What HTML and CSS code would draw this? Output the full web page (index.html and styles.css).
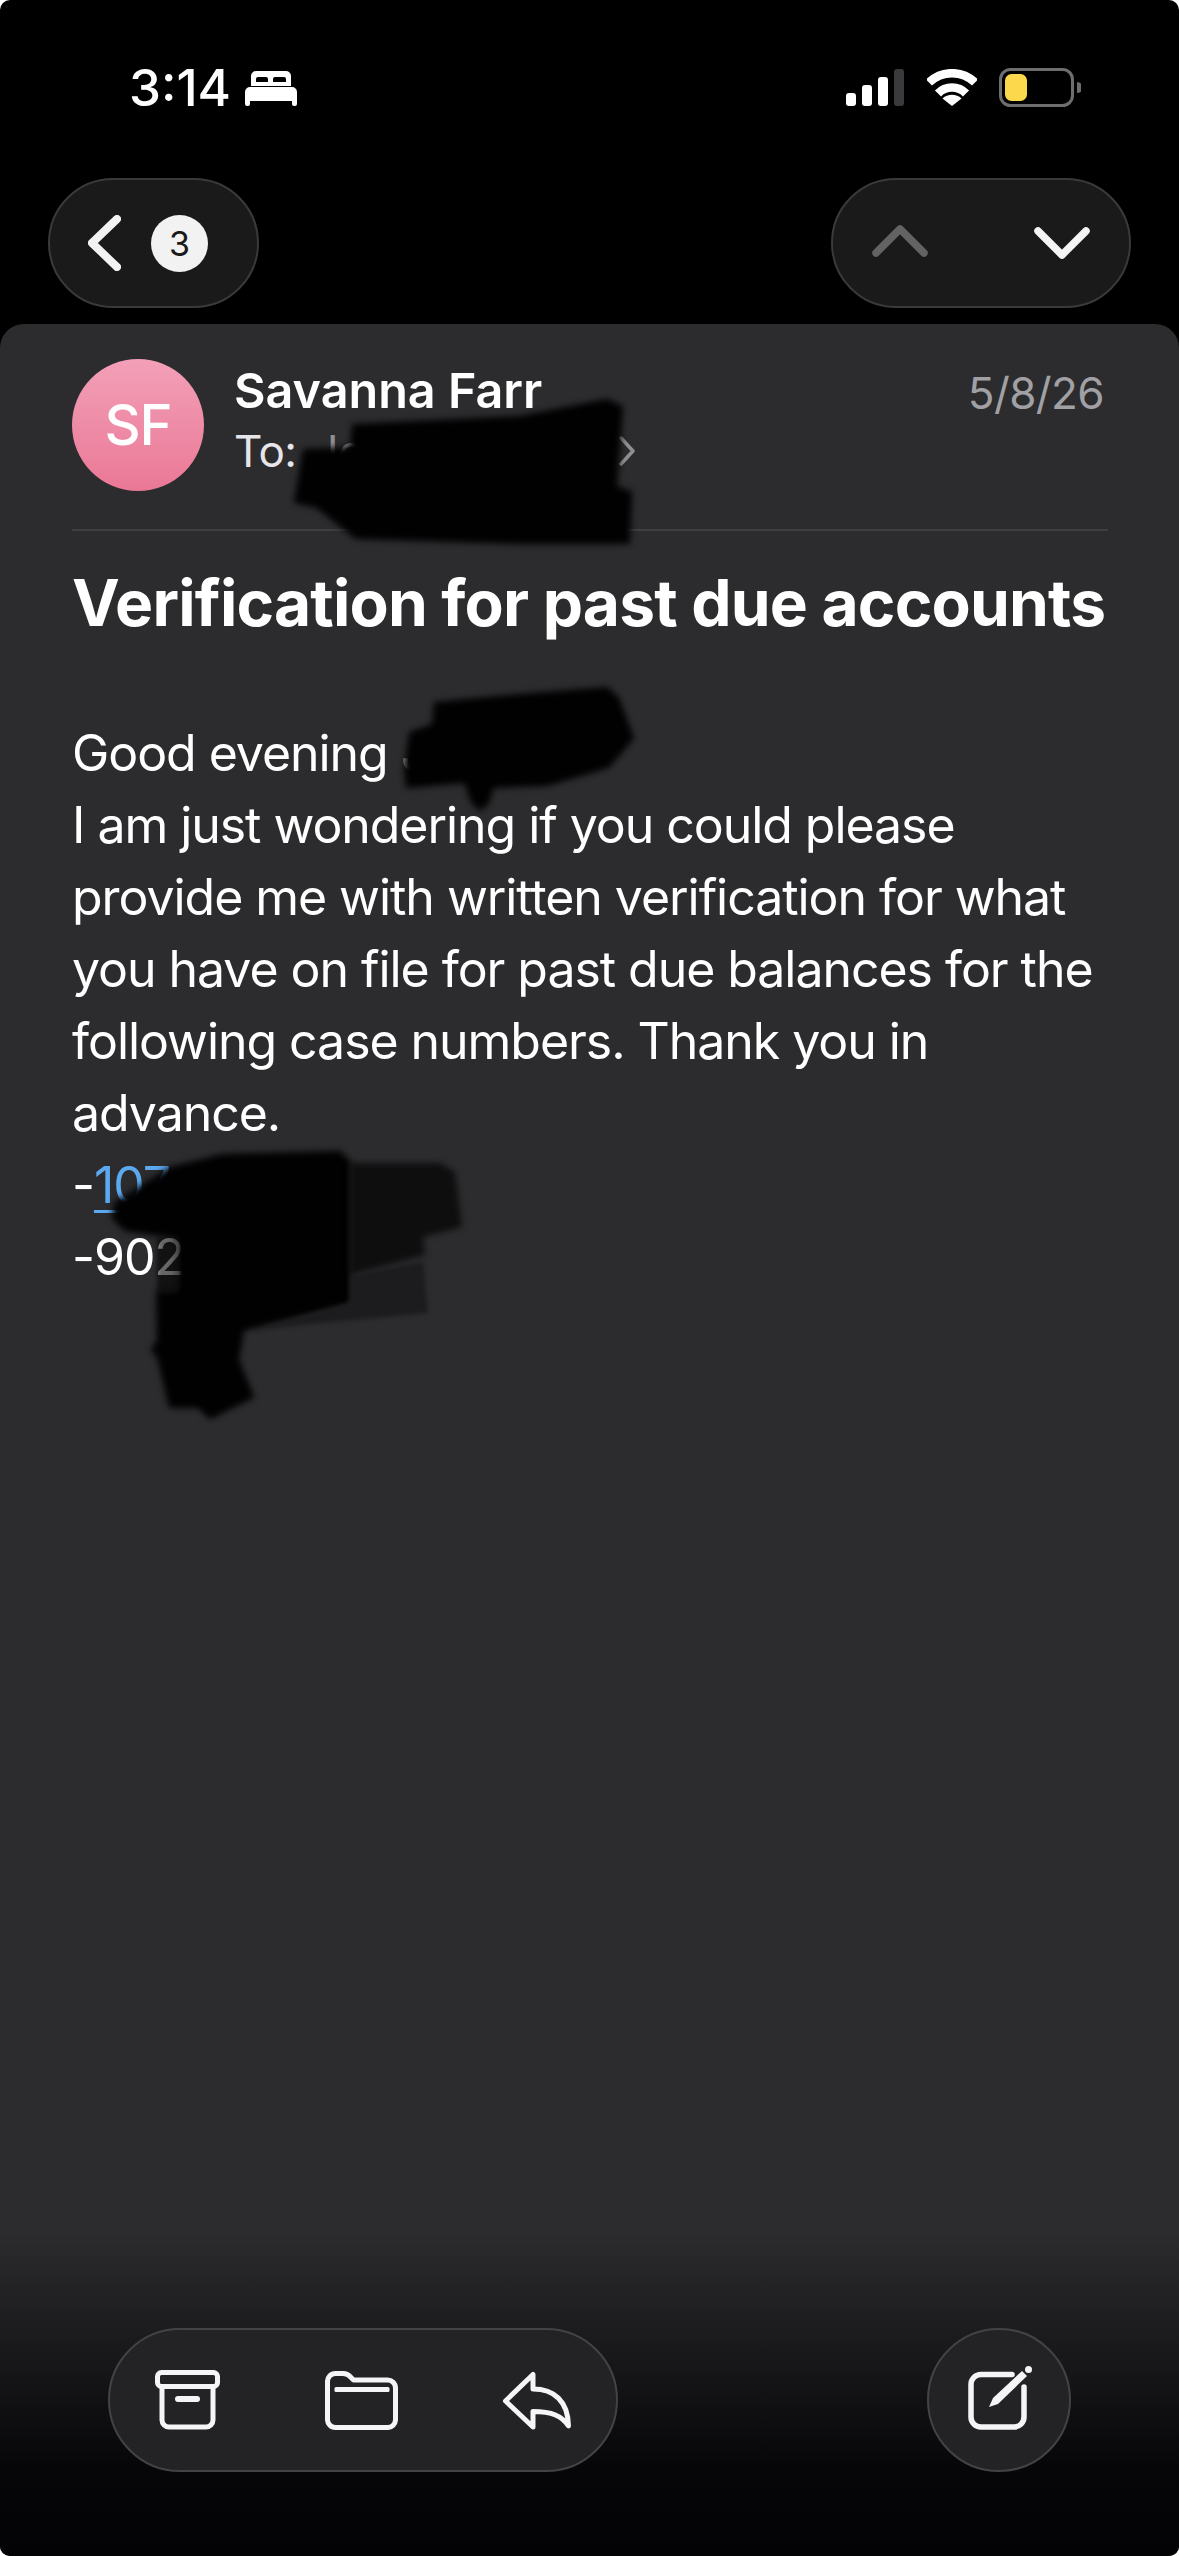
FILE: index.html
```html
<!DOCTYPE html>
<html lang="en">
<head>
<meta charset="utf-8">
<title>Verification for past due accounts</title>
<link rel="stylesheet" href="styles.css">
</head>
<body>
<div class="screen">
  <header class="status">
    <div class="status-left">
      <span class="time">3:14</span>
      <svg class="bed" viewBox="0 0 52 35"><path fill="#fff" fill-rule="evenodd" d="M11 0H41a5 5 0 0 1 5 5V15H6V5a5 5 0 0 1 5-5ZM11 11H23V8a2 2 0 0 0-2-2H13a2 2 0 0 0-2 2ZM28 11H41V8a2 2 0 0 0-2-2H30a2 2 0 0 0-2 2ZM5 16H47a5 5 0 0 1 5 5V33a2 2 0 0 1-2 2H49a2 2 0 0 1-2-2V30H5V33a2 2 0 0 1-2 2H2a2 2 0 0 1-2-2V21a5 5 0 0 1 5-5Z"/></svg>
    </div>
    <div class="status-right">
      <svg class="signal" viewBox="0 0 58 37"><rect y="24" width="10" height="13" rx="3" fill="#fff"/><rect x="16" y="16" width="10" height="21" rx="3" fill="#fff"/><rect x="32" y="8" width="10" height="29" rx="3" fill="#fff"/><rect x="48" width="10" height="37" rx="3" fill="#3a3a3c"/></svg>
      <svg class="wifi" viewBox="0 0 50 37"><g fill="none" stroke="#fff" stroke-width="8.5"><path d="M2 13.5A33 33 0 0 1 48 13.5"/><path d="M11 24.5A19.500 19.500 0 0 1 39 24.500"/></g><path fill="#fff" d="M25 37 15.500 29.500A14 14 0 0 1 34.500 29.500Z"/></svg>
      <svg class="battery" viewBox="0 0 82 39"><rect x="1.500" y="1.500" width="72" height="36" rx="10" fill="none" stroke="#6e6e70" stroke-width="3"/><rect x="6" y="6" width="22" height="27" rx="6.500" fill="#fbd84c"/><path d="M78 14a5.500 5.500 0 0 1 0 11Z" fill="#6e6e70"/></svg>
    </div>
  </header>

  <nav class="nav">
    <div class="pill back-pill">
      <svg class="back-chevron" viewBox="0 0 33 56"><path d="M29 4 4 28 29 52"/></svg>
      <span class="badge">3</span>
    </div>
    <div class="pill updown-pill">
      <svg class="chev chev-off" viewBox="0 0 56 32"><path d="M4 28 28 4 52 28"/></svg>
      <svg class="chev chev-on" viewBox="0 0 56 32"><path d="M4 4 28 28 52 4"/></svg>
    </div>
  </nav>

  <main class="card">
    <section class="message">
      <div class="meta">
        <div class="avatar">SF</div>
        <div class="who">
          <div class="name">Savanna Farr</div>
          <div class="to"><span>To:</span><span class="recipient">Jo</span>
            <svg class="to-chevron" viewBox="0 0 16 30"><path d="M2 2 14 15 2 28"/></svg>
          </div>
        </div>
        <time class="date">5/8/26</time>
      </div>
      <h1 class="subject">Verification for past due accounts</h1>
      <p class="body-text">Good evening <span class="dim">J</span><br>I am just wondering if you could please<br>provide me with written verification for what<br>you have on file for past due balances for the<br>following case numbers. Thank you in<br>advance.<br>-<a class="case-link" href="#">107</a><br>-902</p>
    </section>

    <footer class="toolbar">
      <div class="tool-pill">
        <svg class="icon archive" viewBox="0 0 65 60"><rect x="2.500" y="2.500" width="60" height="14" rx="4"/><path d="M7 17V50a7 7 0 0 0 7 7H51a7 7 0 0 0 7-7V17"/><rect class="solid" x="20" y="26" width="25" height="6" rx="3"/></svg>
        <svg class="icon folder" viewBox="0 0 73 59"><path d="M2.500 11a8 8 0 0 1 8-8.500H18c4 0 6 1.500 8 4l2.500 2.500H62a8 8 0 0 1 8.500 8V48a8 8 0 0 1-8.500 8.500H10.500A8 8 0 0 1 2.500 48Z"/><rect class="solid" x="9.500" y="16" width="55" height="5" rx="1.500"/></svg>
        <svg class="icon reply" viewBox="0 0 69 59"><path d="M3.500 30 31 3.500V18C52 18 66 30 66.500 55 60 45 50 40.500 31 40.500V56Z"/></svg>
      </div>
      <div class="compose">
        <svg class="icon pencil" viewBox="0 0 66 65"><path d="M44 8.500H13A10 10 0 0 0 3 18.500V51A10 10 0 0 0 13 61H46A10 10 0 0 0 56 51V21"/><polygon class="solid" points="21,41 25,32 54,5 59,10 30,38"/><circle class="solid" cx="60.500" cy="3.500" r="3.500"/></svg>
      </div>
    </footer>
  </main>

  <svg class="redactions" viewBox="0 0 1179 2556" aria-hidden="true">
    <g class="ink">
      <polygon points="295,502 304,450 351,448 353,425 520,417 607,400 622,407 616,487 631,492 629,543 520,543 356,538 317,507"/>
      <polygon points="435,703 520,695 607,688 618,698 633,738 608,767 547,785 493,787 488,803 480,810 472,802 465,782 407,787 405,770 410,733 433,725"/>
      <polygon points="113,1218 115,1203 170,1168 223,1155 340,1152 350,1163 350,1275 350,1303 243,1330 238,1360 253,1397 210,1418 198,1407 170,1407 158,1357 152,1350 158,1340 157,1292 178,1292 178,1238 125,1230"/>
    </g>
    <g class="ink-veil">
      <polygon points="157,1238 178,1238 178,1292 157,1292"/>
    </g>
    <g class="ink-soft">
      <polygon points="350,1163 440,1163 455,1172 462,1227 423,1237 425,1255 350,1275"/>
    </g>
    <g class="ink-faint">
      <polygon points="350,1275 423,1262 428,1313 257,1329 350,1303"/>
    </g>
  </svg>
</div>
</body>
</html>
```

FILE: styles.css
```css
* { box-sizing: border-box; }
html, body { margin: 0; padding: 0; background: #fff; }
body { font-family: Inter, "Liberation Sans", sans-serif; color: #fff; }

.screen {
  position: relative;
  width: 1179px;
  height: 2556px;
  display: flex;
  flex-direction: column;
  background: #000;
  border-radius: 10px;
  overflow: hidden;
}

/* status bar */
.status {
  height: 178px;
  padding: 68px 98px 0 129px;
  display: flex;
  justify-content: space-between;
  align-items: flex-start;
}
.status-left { display: flex; align-items: flex-start; gap: 14px; }
.time { font-size: 51px; font-weight: 500; line-height: 40px; }
.bed { width: 52px; height: 35px; margin-top: 3px; display: block; }
.status-right { display: flex; align-items: flex-start; }
.signal { width: 58px; height: 37px; margin-top: 1px; margin-right: 23px; display: block; }
.wifi { width: 50px; height: 37px; margin-top: 1px; margin-right: 22px; display: block; }
.battery { width: 82px; height: 39px; display: block; }

/* nav */
.nav {
  height: 146px;
  padding: 0 48px;
  display: flex;
  justify-content: space-between;
  align-items: flex-start;
}
.pill {
  height: 130px;
  border-radius: 65px;
  background: #1a1a1a;
  border: 2px solid #3a3a3a;
  display: flex;
  align-items: center;
}
.back-pill { width: 211px; padding-left: 38px; gap: 30px; }
.back-chevron { width: 33px; height: 56px; display: block; }
.back-chevron path { fill: none; stroke: #f2f2f2; stroke-width: 8; stroke-linecap: round; stroke-linejoin: round; }
.badge {
  width: 57px;
  height: 57px;
  border-radius: 50%;
  background: #f2f2f2;
  color: #1a1a1a;
  font-size: 34px;
  display: flex;
  align-items: center;
  justify-content: center;
}
.updown-pill { width: 300px; padding: 0 39px; justify-content: space-between; }
.chev { width: 56px; height: 32px; display: block; fill: none; stroke-width: 7.500; stroke-linecap: round; stroke-linejoin: round; }
.chev-off { stroke: #636363; margin-top: -4px; }
.chev-on { stroke: #f5f5f5; }

/* card */
.card {
  flex: 1;
  background: #2c2c2e;
  border-radius: 24px 24px 0 0;
  display: flex;
  flex-direction: column;
  justify-content: space-between;
}
.message { padding: 35px 71px 0 72px; }
.meta {
  display: flex;
  align-items: flex-start;
  padding-bottom: 38px;
  border-bottom: 2px solid #3f3f43;
}
.avatar {
  width: 132px;
  height: 132px;
  border-radius: 50%;
  background: linear-gradient(#f3a0b8, #ea7896);
  font-size: 56px;
  font-weight: 500;
  letter-spacing: -1px;
  display: flex;
  align-items: center;
  justify-content: center;
  flex: none;
}
.who { margin-left: 30px; padding-top: 2px; flex: 1; }
.name { font-size: 48.500px; font-weight: 600; line-height: 60px; }
.to { display: flex; align-items: center; font-size: 44px; line-height: 60px; color: #e5e5ea; letter-spacing: -0.5px; }
.recipient { width: 305px; margin-left: 17px; color: #8e8e93; }
.to-chevron { width: 16px; height: 30px; display: block; fill: none; stroke: #8e8e93; stroke-width: 3.500; stroke-linecap: round; stroke-linejoin: round; }
.date { font-size: 44px; line-height: 60px; color: #a0a0a5; padding: 4px 4px 0 0; letter-spacing: -0.6px; }

.subject { margin: 33px 0 0; font-size: 64px; font-weight: 700; line-height: 78px; letter-spacing: -0.8px; white-space: nowrap; }
.body-text { margin: 75px 0 0; font-size: 50px; font-weight: 380; line-height: 72px; letter-spacing: -1.05px; color: #fff; white-space: nowrap; }
.dim { color: #8e8e93; }
.case-link { color: #5ca9f0; text-decoration: underline; text-decoration-thickness: 3px; text-underline-offset: 7px; }

/* bottom toolbar */
.toolbar {
  height: 326px;
  padding: 98px 108px 0;
  display: flex;
  justify-content: space-between;
  align-items: flex-start;
  background: linear-gradient(rgba(5,5,7,0), #060608 74%, #030305);
  border-radius: 0 0 10px 10px;
}
.tool-pill {
  width: 510px;
  height: 144px;
  border-radius: 72px;
  background: #232325;
  border: 2px solid #434345;
  padding: 0 45px;
  display: flex;
  align-items: center;
  justify-content: space-between;
}
.compose {
  width: 144px;
  height: 144px;
  border-radius: 50%;
  background: #232325;
  border: 2px solid #434345;
  display: flex;
  align-items: center;
  justify-content: center;
}
.icon { display: block; fill: none; stroke: #f5f5f7; stroke-width: 5; stroke-linecap: round; stroke-linejoin: round; }
.icon .solid { fill: #f5f5f7; stroke: none; }
.archive { width: 65px; height: 60px; }
.folder { width: 73px; height: 59px; }
.reply { width: 69px; height: 59px; }
.pencil { width: 66px; height: 65px; margin-left: 3px; margin-top: -4px; stroke-width: 5.500; }

/* scribbled-out areas, drawn over the message */
.redactions { position: absolute; left: 0; top: 0; width: 1179px; height: 2556px; pointer-events: none; }
.ink { fill: #010102; stroke: #010102; stroke-width: 2; stroke-linejoin: round; filter: blur(3px); }
.ink-veil { fill: #010102; opacity: 0.6; filter: blur(2px); }
.ink-soft { fill: #0e0e0f; filter: blur(3px); }
.ink-faint { fill: #1c1c1e; filter: blur(2px); }
```
